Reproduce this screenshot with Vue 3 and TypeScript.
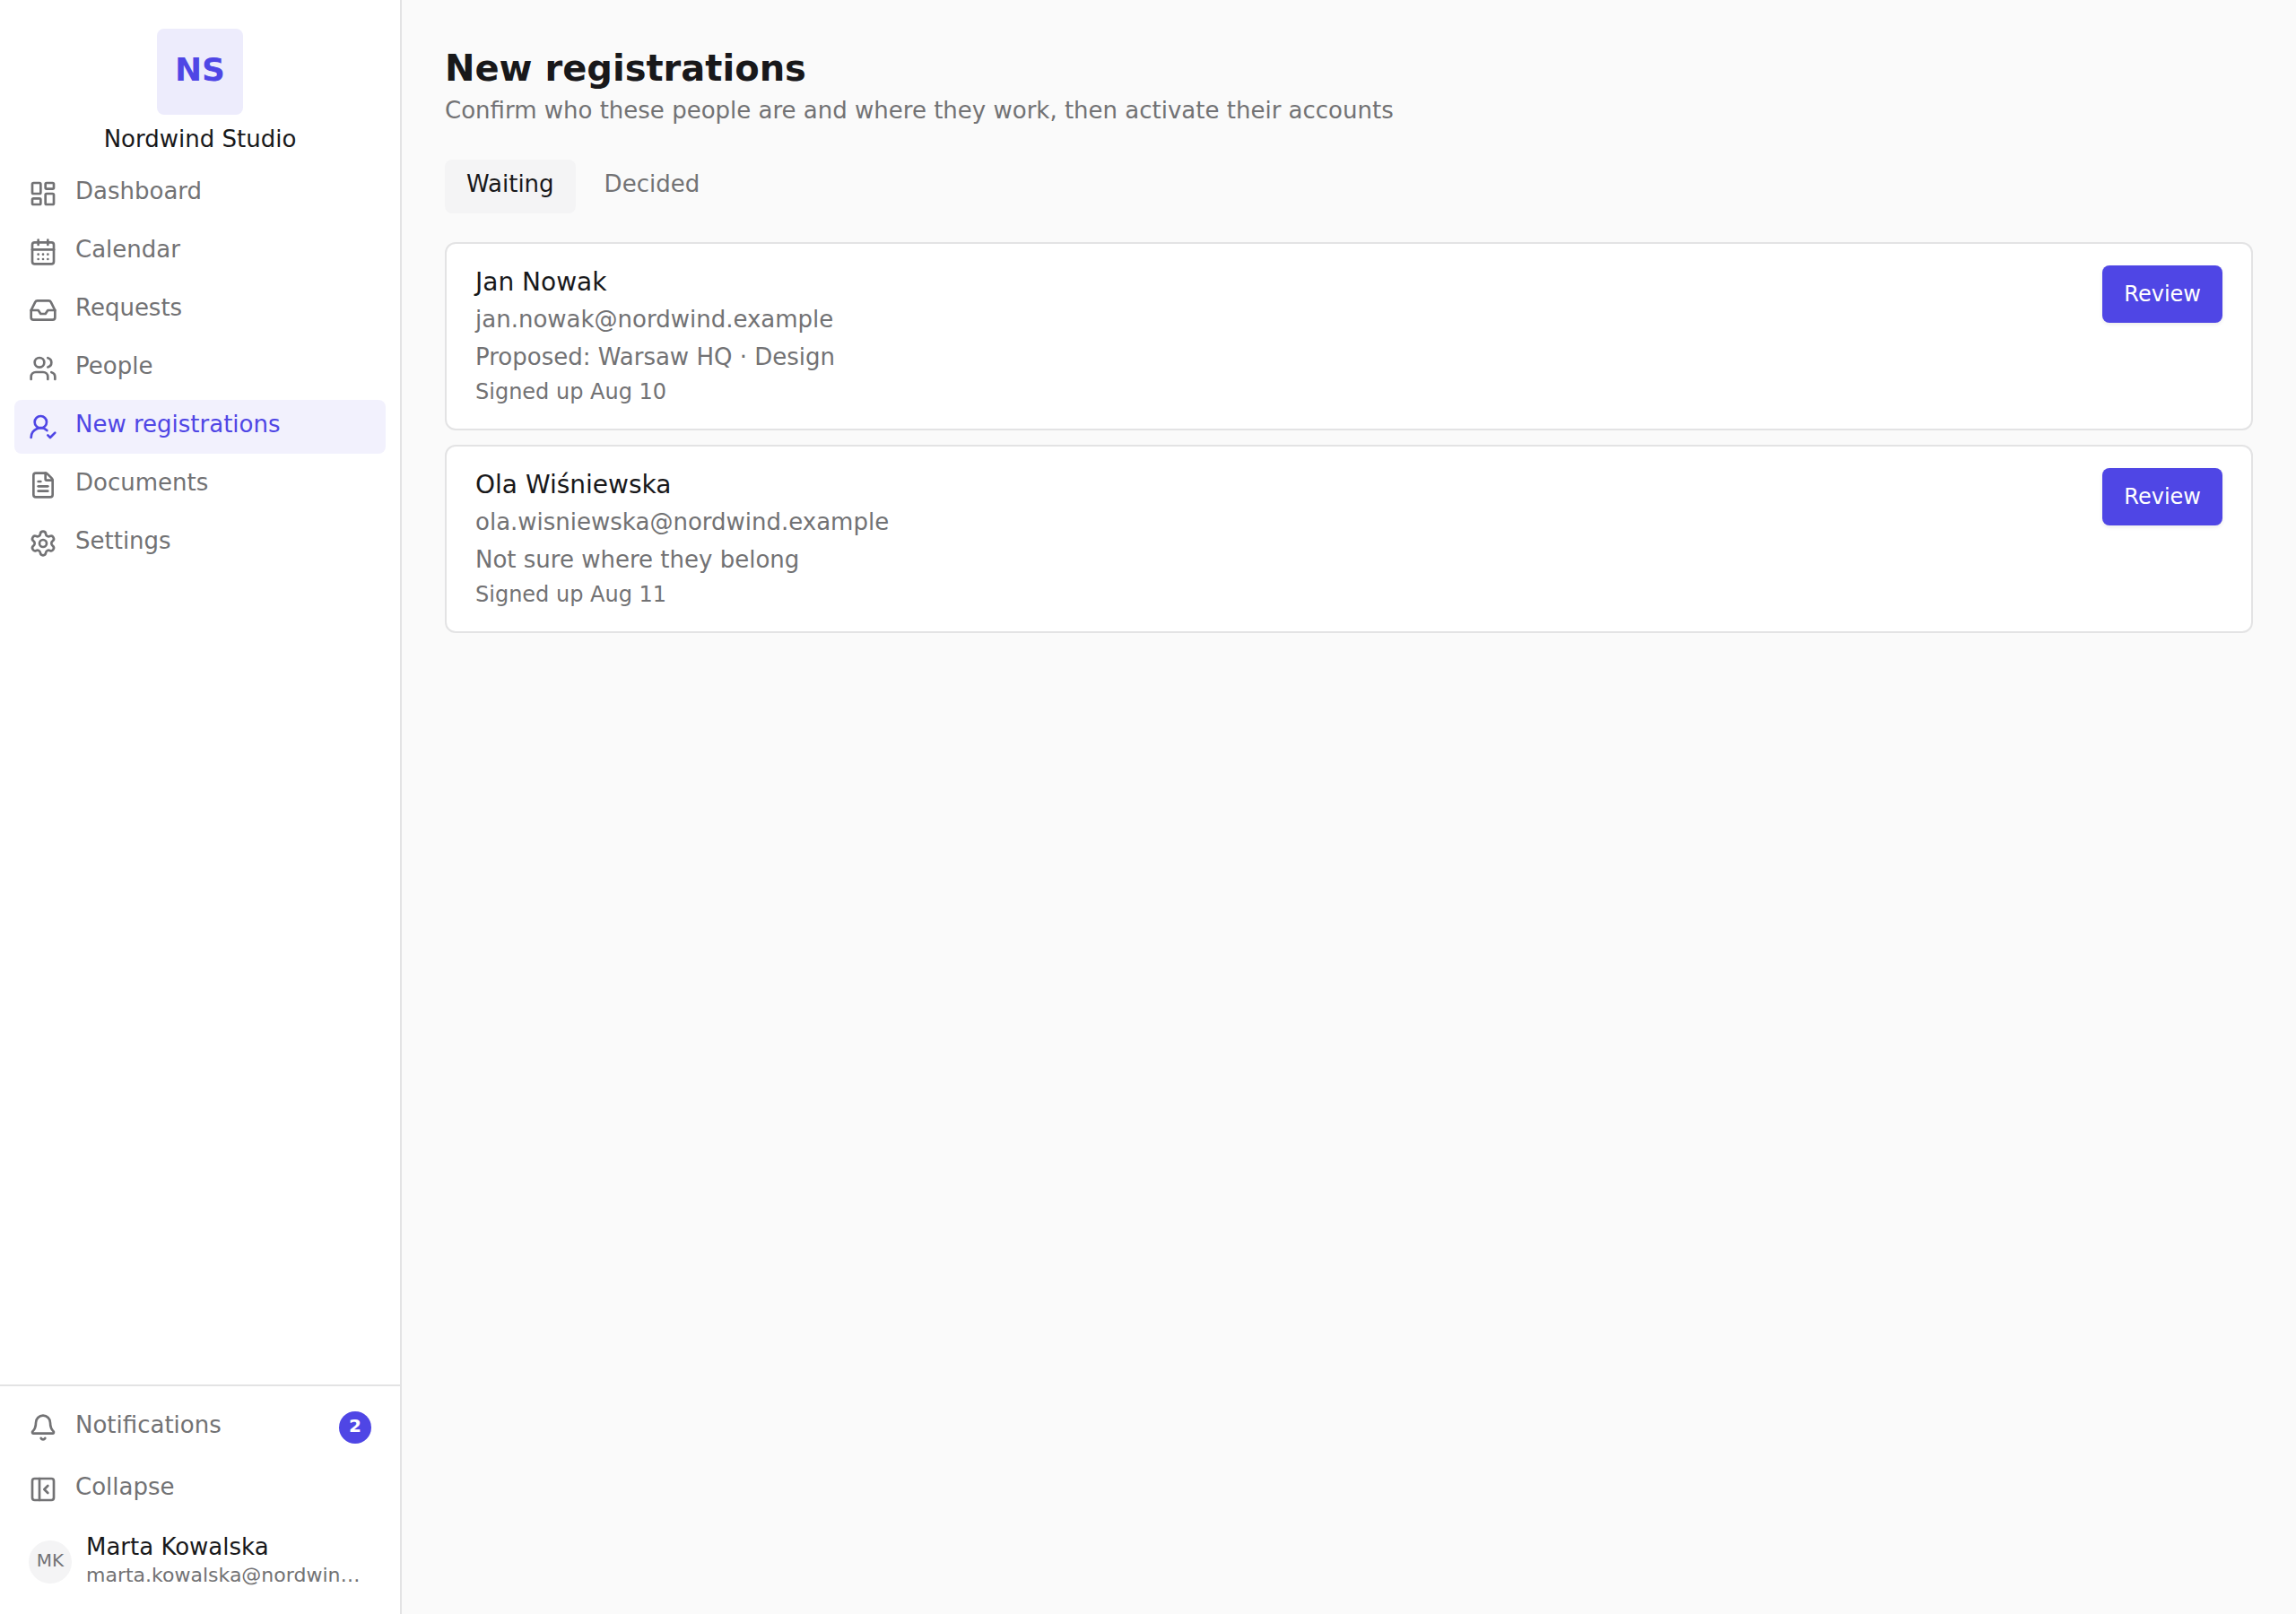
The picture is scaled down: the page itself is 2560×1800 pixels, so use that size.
<script setup lang="ts">
import { ref } from 'vue'

interface NavItem {
  label: string
  icon: string
  active?: boolean
}

interface Registration {
  name: string
  email: string
  placement: string
  signedUp: string
}

const icons: Record<string, string[]> = {
  dashboard: [
    'M4 3h5a1 1 0 0 1 1 1v7a1 1 0 0 1-1 1H4a1 1 0 0 1-1-1V4a1 1 0 0 1 1-1z',
    'M15 3h5a1 1 0 0 1 1 1v3a1 1 0 0 1-1 1h-5a1 1 0 0 1-1-1V4a1 1 0 0 1 1-1z',
    'M15 12h5a1 1 0 0 1 1 1v7a1 1 0 0 1-1 1h-5a1 1 0 0 1-1-1v-7a1 1 0 0 1 1-1z',
    'M4 16h5a1 1 0 0 1 1 1v3a1 1 0 0 1-1 1H4a1 1 0 0 1-1-1v-3a1 1 0 0 1 1-1z',
  ],
  calendar: [
    'M8 2v4',
    'M16 2v4',
    'M5 4h14a2 2 0 0 1 2 2v14a2 2 0 0 1-2 2H5a2 2 0 0 1-2-2V6a2 2 0 0 1 2-2z',
    'M3 10h18',
    'M8 14h.01',
    'M12 14h.01',
    'M16 14h.01',
    'M8 18h.01',
    'M12 18h.01',
    'M16 18h.01',
  ],
  inbox: [
    'M22 12h-6l-2 3h-4l-2-3H2',
    'M5.45 5.11 2 12v6a2 2 0 0 0 2 2h16a2 2 0 0 0 2-2v-6l-3.45-6.89A2 2 0 0 0 16.76 4H7.24a2 2 0 0 0-1.79 1.11z',
  ],
  people: [
    'M16 21v-2a4 4 0 0 0-4-4H6a4 4 0 0 0-4 4v2',
    'M16 3.128a4 4 0 0 1 0 7.744',
    'M22 21v-2a4 4 0 0 0-3-3.87',
    'M13 7a4 4 0 1 1-8 0 4 4 0 0 1 8 0z',
  ],
  userCheck: [
    'M2 21a8 8 0 0 1 13.292-6',
    'M15 8a5 5 0 1 1-10 0 5 5 0 0 1 10 0z',
    'm16 19 2 2 4-4',
  ],
  document: [
    'M6 22a2 2 0 0 1-2-2V4a2 2 0 0 1 2-2h8a2.4 2.4 0 0 1 1.704.706l3.588 3.588A2.4 2.4 0 0 1 20 8v12a2 2 0 0 1-2 2z',
    'M14 2v5a1 1 0 0 0 1 1h5',
    'M10 9H8',
    'M16 13H8',
    'M16 17H8',
  ],
  settings: [
    'M9.671 4.136a2.34 2.34 0 0 1 4.659 0 2.34 2.34 0 0 0 3.319 1.915 2.34 2.34 0 0 1 2.33 4.033 2.34 2.34 0 0 0 0 3.831 2.34 2.34 0 0 1-2.33 4.033 2.34 2.34 0 0 0-3.319 1.915 2.34 2.34 0 0 1-4.659 0 2.34 2.34 0 0 0-3.32-1.915 2.34 2.34 0 0 1-2.33-4.033 2.34 2.34 0 0 0 0-3.831A2.34 2.34 0 0 1 6.35 6.051a2.34 2.34 0 0 0 3.319-1.915',
    'M15 12a3 3 0 1 1-6 0 3 3 0 0 1 6 0z',
  ],
  bell: [
    'M10.268 21a2 2 0 0 0 3.464 0',
    'M3.262 15.326A1 1 0 0 0 4 17h16a1 1 0 0 0 .74-1.673C19.41 13.956 18 12.499 18 8A6 6 0 0 0 6 8c0 4.499-1.411 5.956-2.738 7.326',
  ],
  collapse: [
    'M5 3h14a2 2 0 0 1 2 2v14a2 2 0 0 1-2 2H5a2 2 0 0 1-2-2V5a2 2 0 0 1 2-2z',
    'M9 3v18',
    'm16 15-3-3 3-3',
  ],
}

const navItems: NavItem[] = [
  { label: 'Dashboard', icon: 'dashboard' },
  { label: 'Calendar', icon: 'calendar' },
  { label: 'Requests', icon: 'inbox' },
  { label: 'People', icon: 'people' },
  { label: 'New registrations', icon: 'userCheck', active: true },
  { label: 'Documents', icon: 'document' },
  { label: 'Settings', icon: 'settings' },
]

const tabs = ['Waiting', 'Decided']
const currentTab = ref('Waiting')

const registrations: Registration[] = [
  {
    name: 'Jan Nowak',
    email: 'jan.nowak@nordwind.example',
    placement: 'Proposed: Warsaw HQ · Design',
    signedUp: 'Signed up Aug 10',
  },
  {
    name: 'Ola Wiśniewska',
    email: 'ola.wisniewska@nordwind.example',
    placement: 'Not sure where they belong',
    signedUp: 'Signed up Aug 11',
  },
]
</script>

<template>
  <div class="app">
    <aside class="sidebar">
      <div class="brand">
        <div class="brand-logo"><span>NS</span></div>
        <div class="brand-name">Nordwind Studio</div>
      </div>

      <nav class="nav" aria-label="Main">
        <a
          v-for="item in navItems"
          :key="item.label"
          href="#"
          class="row"
          :class="{ active: item.active }"
          :aria-current="item.active ? 'page' : undefined"
        >
          <svg class="icon" viewBox="0 0 24 24" aria-hidden="true">
            <path v-for="d in icons[item.icon]" :key="d" :d="d" />
          </svg>
          <span class="label">{{ item.label }}</span>
        </a>
      </nav>

      <div class="sidebar-footer">
        <a href="#" class="row">
          <svg class="icon" viewBox="0 0 24 24" aria-hidden="true">
            <path v-for="d in icons.bell" :key="d" :d="d" />
          </svg>
          <span class="label">Notifications</span>
          <span class="badge"><span>2</span></span>
        </a>
        <button type="button" class="row">
          <svg class="icon" viewBox="0 0 24 24" aria-hidden="true">
            <path v-for="d in icons.collapse" :key="d" :d="d" />
          </svg>
          <span class="label">Collapse</span>
        </button>
        <a href="#" class="user">
          <span class="avatar"><span>MK</span></span>
          <span class="user-text">
            <span class="user-name">Marta Kowalska</span>
            <span class="user-email">marta.kowalska@nordwind.example</span>
          </span>
        </a>
      </div>
    </aside>

    <main class="main">
      <h1 class="title">New registrations</h1>
      <p class="subtitle">Confirm who these people are and where they work, then activate their accounts</p>

      <div class="tabs" role="tablist">
        <button
          v-for="tab in tabs"
          :key="tab"
          type="button"
          role="tab"
          class="tab"
          :class="{ selected: tab === currentTab }"
          :aria-selected="tab === currentTab"
          @click="currentTab = tab"
        >
          {{ tab }}
        </button>
      </div>

      <ul class="cards">
        <li v-for="person in registrations" :key="person.email" class="card">
          <div class="card-text">
            <div class="card-name">{{ person.name }}</div>
            <div class="card-line">{{ person.email }}</div>
            <div class="card-line">{{ person.placement }}</div>
            <div class="card-date">{{ person.signedUp }}</div>
          </div>
          <button type="button" class="review">Review</button>
        </li>
      </ul>
    </main>
  </div>
</template>

<style>
body {
  margin: 0;
  background: #fafafa;
}
</style>

<style scoped>
.app {
  --text: #18181a;
  --muted: #727274;
  --line: #e3e3e4;
  --accent: #4f46e5;

  display: flex;
  min-height: 100vh;
  background: #fafafa;
  color: var(--text);
  font-family: 'DejaVu Sans', sans-serif;
  font-size: 26px;
  line-height: 38px;
}

.app *,
.app {
  box-sizing: border-box;
}

button {
  margin: 0;
  border: 0;
  background: none;
  font: inherit;
  text-align: left;
  cursor: pointer;
}

a {
  text-decoration: none;
}

.sidebar {
  display: flex;
  flex: none;
  flex-direction: column;
  width: 448px;
  border-right: 2px solid var(--line);
  background: #fff;
}

.brand {
  display: flex;
  flex-direction: column;
  align-items: center;
  gap: 8px;
  padding: 32px 16px 12px;
}

.brand-logo {
  display: flex;
  align-items: center;
  justify-content: center;
  width: 96px;
  height: 96px;
  border-radius: 8px;
  background: #edecfc;
  color: var(--accent);
  font-size: 36px;
  font-weight: 700;
}

.brand-logo span,
.badge span,
.avatar span {
  padding-bottom: 5px;
}

.nav {
  display: flex;
  flex: 1;
  flex-direction: column;
  gap: 5px;
  padding: 0 16px;
}

.row {
  display: flex;
  align-items: center;
  gap: 20px;
  height: 60px;
  padding: 0 16px;
  border-radius: 8px;
  color: var(--muted);
}

.row.active {
  background: #f2f1fd;
  color: var(--accent);
}

.icon {
  flex: none;
  width: 32px;
  height: 32px;
  fill: none;
  stroke: currentColor;
  stroke-width: 2;
  stroke-linecap: round;
  stroke-linejoin: round;
}

.label {
  flex: 1;
  padding-bottom: 6px;
}

.badge {
  display: flex;
  align-items: center;
  justify-content: center;
  width: 36px;
  height: 36px;
  border-radius: 50%;
  background: var(--accent);
  color: #fff;
  font-size: 20px;
  font-weight: 700;
}

.sidebar-footer {
  display: flex;
  flex-direction: column;
  gap: 9px;
  padding: 16px 16px 26px;
  border-top: 2px solid var(--line);
}

.user {
  display: flex;
  align-items: center;
  gap: 16px;
  padding: 10px 16px 0;
  color: var(--text);
}

.avatar {
  display: flex;
  flex: none;
  align-items: center;
  justify-content: center;
  width: 48px;
  height: 48px;
  border-radius: 50%;
  background: #f4f4f5;
  color: var(--muted);
  font-size: 20px;
}

.user-text {
  display: flex;
  flex: 1;
  flex-direction: column;
  min-width: 0;
}

.user-name {
  line-height: 30px;
}

.user-email {
  overflow: hidden;
  color: var(--muted);
  font-size: 22px;
  line-height: 34px;
  text-overflow: ellipsis;
  white-space: nowrap;
}

.main {
  flex: 1;
  min-width: 0;
  padding: 48px;
}

.title {
  margin: 0;
  font-size: 40px;
  font-weight: 700;
  line-height: 56px;
}

.subtitle {
  margin: 0 0 36px;
  color: var(--muted);
}

.tabs {
  display: flex;
  gap: 8px;
  margin-bottom: 32px;
}

.tab {
  padding: 8px 24px 14px;
  border-radius: 8px;
  color: var(--muted);
}

.tab.selected {
  background: #f4f4f5;
  color: var(--text);
}

.cards {
  display: flex;
  flex-direction: column;
  gap: 16px;
  margin: 0;
  padding: 0;
  list-style: none;
}

.card {
  display: flex;
  align-items: flex-start;
  justify-content: space-between;
  padding: 24px 32px;
  border: 2px solid var(--line);
  border-radius: 12px;
  background: #fff;
}

.card-text {
  display: flex;
  flex-direction: column;
  gap: 2px;
  color: var(--muted);
}

.card-name {
  color: var(--text);
  font-size: 28px;
  line-height: 38px;
}

.card-line {
  line-height: 40px;
}

.card-date {
  font-size: 24px;
  line-height: 34px;
}

.review {
  height: 64px;
  padding: 0 24px;
  border-radius: 8px;
  background: var(--accent);
  box-shadow: 0 2px 4px rgba(0, 0, 0, 0.08);
  color: #fff;
  font-size: 24px;
}
</style>
